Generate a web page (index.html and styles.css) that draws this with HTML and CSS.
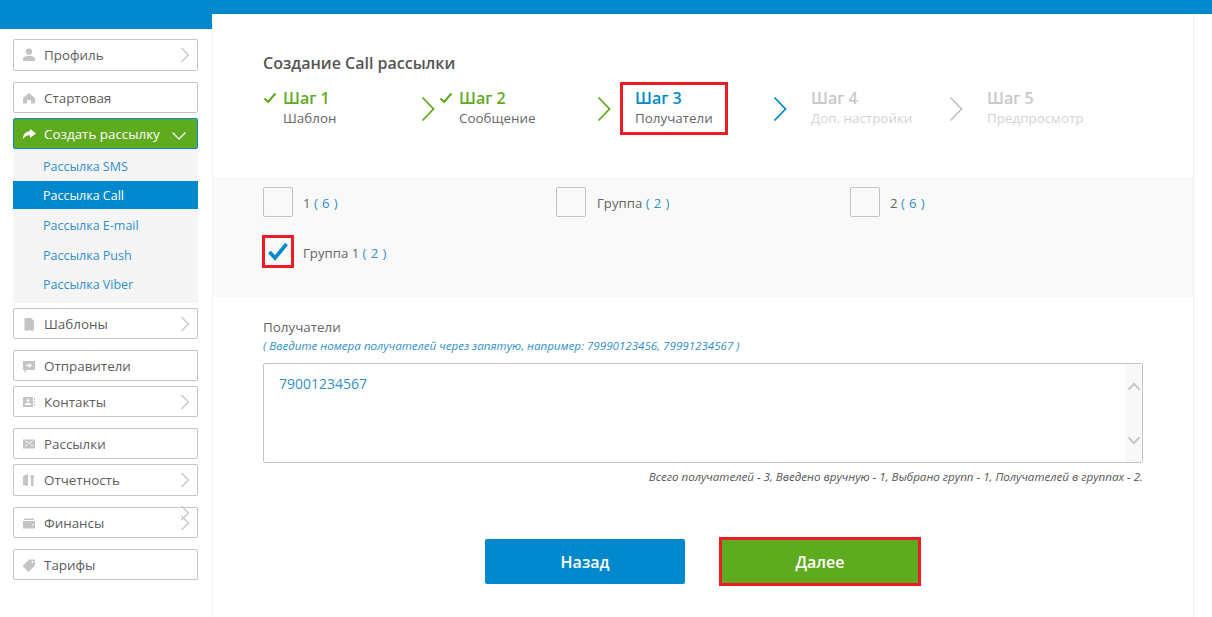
FILE: index.html
```html
<!DOCTYPE html>
<html lang="ru">
<head>
<meta charset="utf-8">
<title>Создание Call рассылки</title>
<link rel="stylesheet" href="styles.css">
</head>
<body>
<div class="page">
  <aside class="sidebar">
    <div class="side-band"></div>
    <nav class="menu">
      <a class="item tall gap-11"><svg class="ico" viewBox="0 0 14 14"><circle cx="7" cy="3.600" r="3.200"/><path d="M1 13v-2.500c0-1.300 3-2.200 4-2.700h4c1 .5 4 1.400 4 2.700V13z"/></svg><span>Профиль</span><svg class="chev" viewBox="0 0 10 16"><path d="M1.500 1l7 7-7 7"/></svg></a>
      <a class="item gap-5"><svg class="ico" viewBox="0 0 14 14"><path d="M7 2l6 5v5.500H9V9H5v3.500H1V7z"/></svg><span>Стартовая</span></a>
      <a class="item active"><svg class="ico" viewBox="0 0 14 14"><path d="M8 2l6 4.500L8 11V8.200C5 8 3 9 1 12c0-4 2-7.500 7-7.800z"/></svg><span>Создать рассылку</span><svg class="chev-down" viewBox="0 0 16 10"><path d="M1.500 1.500l6.500 6.500 6.500-6.500"/></svg></a>
      <div class="submenu gap-5">
        <a class="sub">Рассылка SMS</a>
        <a class="sub current">Рассылка Call</a>
        <a class="sub">Рассылка E-mail</a>
        <a class="sub">Рассылка Push</a>
        <a class="sub">Рассылка Viber</a>
      </div>
      <a class="item gap-11"><svg class="ico" viewBox="0 0 14 14"><path d="M2.500 1h6.500l3 3v9.500H2.500z"/></svg><span>Шаблоны</span><svg class="chev" viewBox="0 0 10 16"><path d="M1.500 1l7 7-7 7"/></svg></a>
      <a class="item gap-5"><svg class="ico" viewBox="0 0 14 14"><path d="M1 2h12v9H5l-2.500 2.500V11H1zM7 4v1.800H4v1.500h3V9l3-2.500z" fill-rule="evenodd"/></svg><span>Отправители</span></a>
      <a class="item gap-11"><svg class="ico" viewBox="0 0 14 14"><path d="M1 2h10v10H1zM6 4a1.500 1.500 0 100 3 1.500 1.500 0 000-3zM3 10h6V8.500L7.500 8h-3L3 8.500z" fill-rule="evenodd"/><path d="M12 3h1v2h-1zM12 6h1v2h-1zM12 9h1v2h-1z"/></svg><span>Контакты</span><svg class="chev" viewBox="0 0 10 16"><path d="M1.500 1l7 7-7 7"/></svg></a>
      <a class="item gap-5"><svg class="ico" viewBox="0 0 14 14"><path d="M1 2.500h12v9H1zM3 4l4 3 4-3-.6-.5L7 6 3.600 3.500zM3 10l2.500-2.500-.6-.6L3 9zM11 10L8.500 7.500l.6-.6L11 9z" fill-rule="evenodd"/></svg><span>Рассылки</span></a>
      <a class="item tall gap-11"><svg class="ico" viewBox="0 0 14 14"><path d="M1 3l5-2v12l-5-1zM7.500 2.500H13l-1.500 2V13H9V5z"/></svg><span>Отчетность</span><svg class="chev" viewBox="0 0 10 16"><path d="M1.500 1l7 7-7 7"/></svg></a>
      <a class="item gap-11 finance"><svg class="ico" viewBox="0 0 14 14"><path d="M2 2.500h10V4H1.500zM1 5h12v7.500H1zM10 8v1.500h1.500V8z" fill-rule="evenodd"/></svg><span>Финансы</span><svg class="chev" viewBox="0 0 10 16"><path d="M1.500 1l7 7-7 7"/></svg><svg class="chev chev-extra" viewBox="0 0 10 16"><path d="M1.500 1l7 7-7 7"/></svg></a>
      <a class="item"><svg class="ico" viewBox="0 0 14 14"><path d="M7 1.500h6v6L6.500 14 .5 8zM10.500 3a1 1 0 100 2 1 1 0 000-2z" fill-rule="evenodd"/></svg><span>Тарифы</span></a>
    </nav>
  </aside>
  <div class="main">
    <div class="top-strip"></div>
    <div class="main-row">
      <main class="card">
        <section class="head">
          <h1 class="title">Создание Call рассылки</h1>
          <ol class="steps">
            <li class="step done">
              <svg class="tick" viewBox="0 0 14 12"><path d="M1.500 6.500l3.500 3.500 7.500-8.500"/></svg>
              <div class="step-text"><b>Шаг 1</b><span>Шаблон</span></div>
              <svg class="arrow" viewBox="0 0 14 26"><path d="M1.500 1.500l11 11.500-11 11.500"/></svg>
            </li>
            <li class="step done">
              <svg class="tick" viewBox="0 0 14 12"><path d="M1.500 6.500l3.500 3.500 7.500-8.500"/></svg>
              <div class="step-text"><b>Шаг 2</b><span>Сообщение</span></div>
              <svg class="arrow" viewBox="0 0 14 26"><path d="M1.500 1.500l11 11.500-11 11.500"/></svg>
            </li>
            <li class="step now">
              <i class="tick"></i>
              <div class="step-text marked"><b>Шаг 3</b><span>Получатели</span></div>
              <svg class="arrow" viewBox="0 0 14 26"><path d="M1.500 1.500l11 11.500-11 11.500"/></svg>
            </li>
            <li class="step todo">
              <i class="tick"></i>
              <div class="step-text"><b>Шаг 4</b><span>Доп. настройки</span></div>
              <svg class="arrow" viewBox="0 0 14 26"><path d="M1.500 1.500l11 11.500-11 11.500"/></svg>
            </li>
            <li class="step todo">
              <i class="tick"></i>
              <div class="step-text"><b>Шаг 5</b><span>Предпросмотр</span></div>
            </li>
          </ol>
        </section>
        <section class="groups">
          <label class="group"><i class="box"></i><span>1 <em>( 6 )</em></span></label>
          <label class="group"><i class="box"></i><span>Группа <em>( 2 )</em></span></label>
          <label class="group"><i class="box"></i><span>2 <em>( 6 )</em></span></label>
          <label class="group"><i class="box checked"><svg viewBox="0 0 22 20"><path d="M2.500 11l5.500 6L19.500 3"/></svg></i><span>Группа 1 <em>( 2 )</em></span></label>
        </section>
        <section class="form">
          <div class="field-label">Получатели</div>
          <div class="hint">( Введите номера получателей через запятую, например: 79990123456, 79991234567 )</div>
          <div class="textarea">
            <div class="value">79001234567</div>
            <div class="scroll">
              <svg viewBox="0 0 14 9"><path d="M1.500 7.500L7 2l5.500 5.500"/></svg>
              <svg viewBox="0 0 14 9"><path d="M1.500 1.500L7 7l5.500-5.500"/></svg>
            </div>
          </div>
          <div class="summary">Всего получателей - 3, Введено вручную - 1, Выбрано групп - 1, Получателей в группах - 2.</div>
        </section>
        <div class="actions">
          <button class="btn back">Назад</button>
          <button class="btn next">Далее</button>
        </div>
      </main>
    </div>
  </div>
</div>
</body>
</html>
```
FILE: styles.css
```css
*, *::after { box-sizing: border-box; }
html, body { margin: 0; padding: 0; height: 100%; overflow: hidden; background: #fff; }
body { font-family: "Open Sans", "Liberation Sans", sans-serif; color: #555; }

.page { display: flex; height: 617px; }

.sidebar { width: 212px; flex: none; }
.side-band { height: 29px; background: #0088cc; margin-right: -1px; }
.menu { display: flex; flex-direction: column; padding: 10px 14px 0 13px; width: 212px; }

.item { position: relative; display: flex; align-items: center; height: 31px; border: 1px solid #c4c4c4; border-radius: 2px; background: #fff; font-size: 13.4px; color: #5c5c5c; padding-left: 8px; }
.item.tall { height: 32px; padding-bottom: 1px; }
.gap-5 { margin-bottom: 5px; }
.gap-11 { margin-bottom: 11px; }
.item .ico { width: 14px; height: 14px; fill: #c4c4c4; flex: none; margin-right: 8px; }
.chev { position: absolute; right: 7px; top: 7px; width: 10px; height: 16px; fill: none; stroke: #c4c4c4; stroke-width: 1.2; }
.chev-extra { top: -3px; }
.item.active { background: #5fab1f; border-color: #0088cc; color: #fff; margin-bottom: 0; }
.item.active .ico { fill: #fff; }
.chev-down { position: absolute; right: 10px; top: 12px; width: 16px; height: 10px; fill: none; stroke: #fff; stroke-width: 1.3; }

.submenu { display: flex; flex-direction: column; background: #f5f5f5; padding: 2px 0 4px; height: 154px; }
.sub { display: flex; align-items: center; height: 29.7px; padding: 2px 0 0 30px; font-size: 12.5px; color: #2f8fd0; }
.sub:first-child { height: 30px; }
.sub:last-child { padding-top: 0; }
.sub.current { background: #0088cc; color: #fff; height: 28px; }
.sub.current + .sub { margin-top: 1px; }

.main { flex: 1; display: flex; flex-direction: column; min-width: 0; }
.top-strip { height: 14px; background: #0088cc; flex: none; }
.main-row { flex: 1; display: flex; min-height: 0; }
.card { width: 982px; flex: none; background: #fff; border-left: 1px solid #f0f0f0; border-right: 1px solid #f0f0f0; }

.head { height: 163px; padding: 38px 50px 0; }
.title { margin: 0; font-size: 16px; font-weight: 600; color: #555; line-height: 22px; }
.steps { display: flex; list-style: none; margin: 13px 0 0; padding: 0; }
.step { display: flex; width: 176px; flex: none; position: relative; height: 46px; padding-right: 4px; }
.tick { display: block; width: 14px; height: 12px; margin: 5px 6px 0 0; flex: none; fill: none; stroke: #5fab1f; stroke-width: 2; }
.step-text { display: flex; flex-direction: column; position: relative; }
.step-text b { font-size: 16px; font-weight: 600; line-height: 22px; }
.step-text span { font-size: 13.4px; line-height: 19px; color: #666; }
.arrow { width: 14px; height: 26px; margin-left: auto; margin-top: 9px; flex: none; fill: none; stroke-width: 1.8; }
.done b { color: #5fab1f; }
.done .arrow { stroke: #5fab1f; }
.now b { color: #0088cc; }
.now .arrow { stroke: #0088cc; }
.todo b { color: #c8c8c8; }
.todo span { color: #d4d4d4; }
.todo .arrow { stroke: #c4c4c4; }
.marked::after { content: ""; position: absolute; left: -15px; right: -15px; top: -5px; height: 53px; border: 3px solid #ed1c24; }

.groups { display: grid; grid-template-columns: 293px 294px 293px; grid-auto-rows: 50px; background: #f9f9f9; height: 120px; padding: 10px 50px 0; }
.group { display: flex; align-items: flex-start; font-size: 13.2px; color: #666; line-height: 32px; }
.group em { font-style: normal; color: #2f8fd0; letter-spacing: .4px; }
.box { display: block; position: relative; width: 30px; height: 30px; border: 1px solid #c4c4c4; border-radius: 2px; margin-right: 10px; flex: none; }
.group:nth-child(2) .box { margin-right: 11px; }
.box.checked { width: 32px; height: 33px; margin: -2px 9px 0 -1px; border: 3px solid #ed1c24; border-radius: 0; }
.box.checked svg { position: absolute; left: 2px; top: 3px; width: 22px; height: 20px; fill: none; stroke: #0088cc; stroke-width: 3.6; }

.form { padding: 20px 50px 0; }
.field-label { font-size: 13.4px; line-height: 20px; color: #666; }
.hint { font-size: 11.6px; font-style: italic; color: #2f8fd0; line-height: 15px; margin-top: 1px; }
.textarea { display: flex; justify-content: space-between; height: 100px; margin-top: 10px; border: 1px solid #c4c4c4; border-radius: 2px; background: #fff; }
.value { padding: 10px 15px; font-size: 14px; line-height: 19px; color: #2f8fd0; }
.scroll { width: 17px; background: #f8f8f8; display: flex; flex-direction: column; justify-content: space-between; align-items: center; padding: 18px 0 17px; }
.scroll svg { width: 14px; height: 9px; fill: none; stroke: #c8c8c8; stroke-width: 2.2; }
.summary { font-size: 11.6px; font-style: italic; color: #555; text-align: right; margin-top: 6px; line-height: 16px; }

.actions { display: flex; justify-content: center; align-items: center; gap: 34px; margin-top: 52px; }
.btn { border: none; font-family: inherit; font-size: 16px; font-weight: 600; color: #fff; padding: 0; }
.back { width: 200px; height: 45px; background: #0088cc; border-radius: 2px; }
.next { width: 202px; height: 49px; background: #5fab1f; border: 3px solid #ed1c24; }
```
